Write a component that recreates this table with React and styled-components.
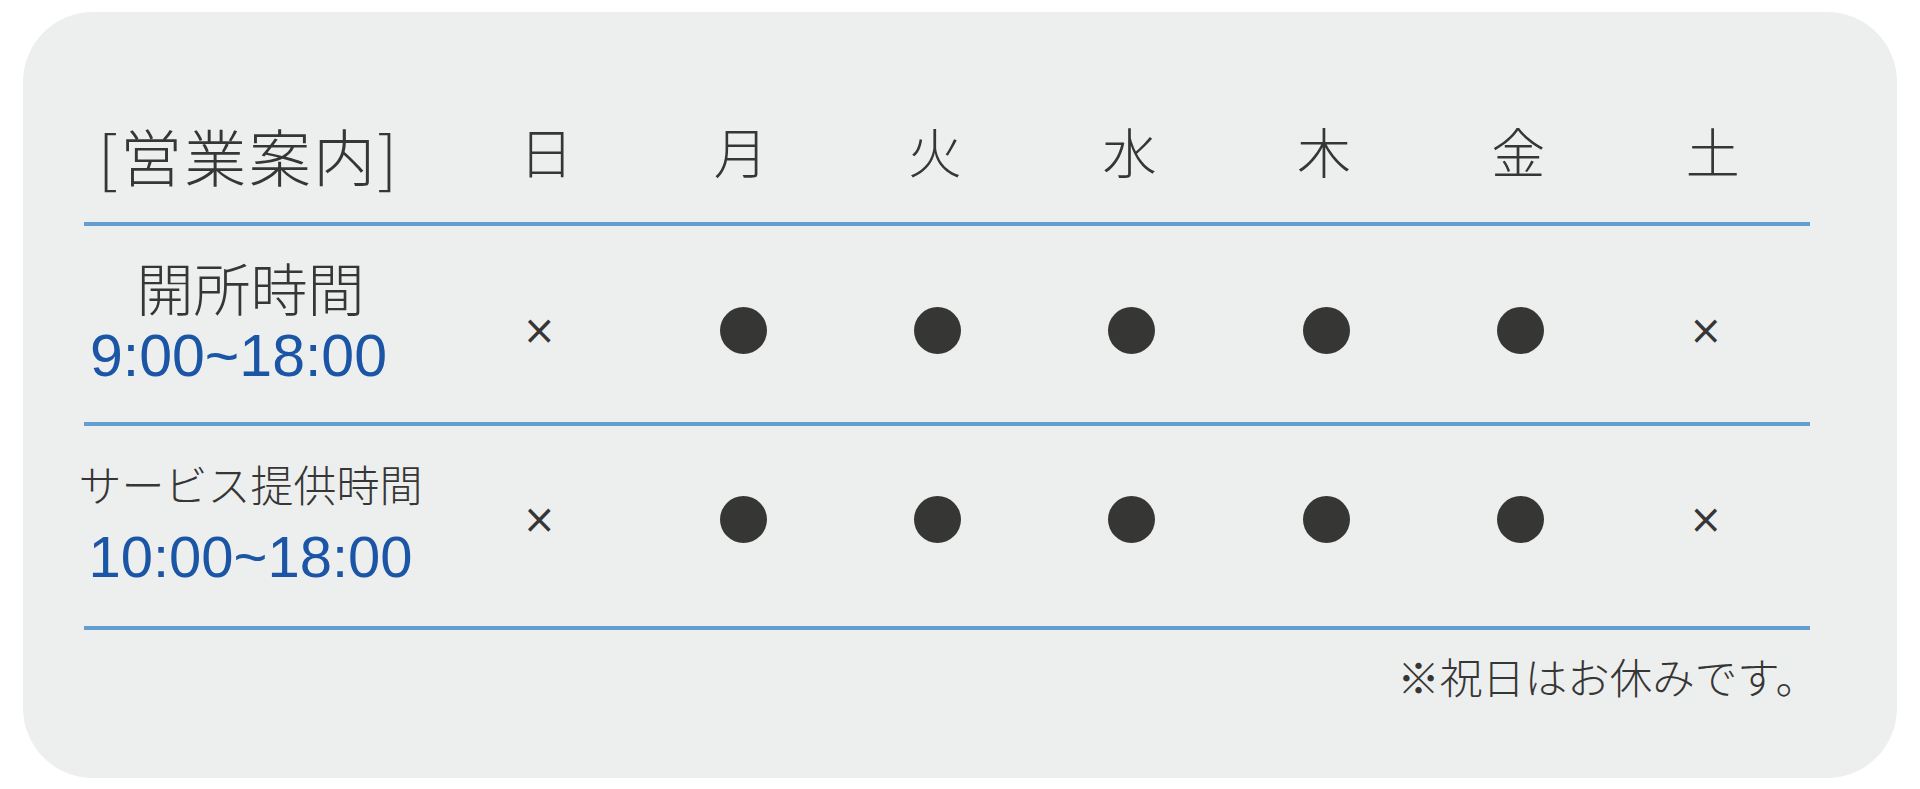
import React from "react";
import styled, { createGlobalStyle } from "styled-components";

const GlobalStyle = createGlobalStyle`
  html, body { margin: 0; padding: 0; background: #ffffff; }
  body {
    font-family: "Noto Sans CJK JP", "Noto Sans", sans-serif;
    color: #333333;
  }
`;

const Page = styled.main`
  padding: 12px 23px 11px 23px;
`;

const Card = styled.section`
  background: #edefee;
  border-radius: 70px;
  height: 766px;
  box-sizing: border-box;
  padding: 0 87px 0 61px;
  display: flex;
  flex-direction: column;
`;

const Row = styled.div`
  display: grid;
  grid-template-columns: 365px repeat(7, 1fr);
  align-items: center;
  box-sizing: border-box;
  height: ${(p) => p.$height}px;
  padding-top: ${(p) => p.$padTop || 0}px;
  padding-bottom: ${(p) => p.$padBottom || 0}px;
  border-bottom: 4px solid #629fd0;
`;

const Title = styled.h1`
  margin: 0;
  font-weight: 300;
  font-size: 62px;
  line-height: 1;
  letter-spacing: 2.4px;
  color: #363636;
  padding-left: 14px;
  transform: translateY(7px);
`;

const DayHead = styled.div`
  text-align: center;
  font-size: 54px;
  font-weight: 300;
  line-height: 1;
  color: #363636;
  transform: translateY(3px);
`;

const Label = styled.div`
  display: flex;
  flex-direction: column;
  align-items: center;
  padding-right: 32px;
  margin-top: ${(p) => p.$offset || 0}px;
`;

const LabelName = styled.div`
  font-size: ${(p) => p.$size}px;
  font-weight: 300;
  line-height: 1.2;
  color: #363636;
  white-space: nowrap;
`;

const Hours = styled.div`
  font-family: "Liberation Sans", Arial, sans-serif;
  font-size: ${(p) => p.$size}px;
  line-height: 1.2;
  color: #1b56a6;
  white-space: nowrap;
  margin-left: ${(p) => p.$shift || 0}px;
  margin-top: ${(p) => p.$gap || 0}px;
`;

const Cell = styled.div`
  display: flex;
  justify-content: center;
  align-items: center;
`;

const Dot = styled.span`
  display: block;
  width: 47px;
  height: 47px;
  border-radius: 50%;
  background: #363734;
  margin-left: 5px;
`;

const Cross = styled.span`
  display: block;
  font-family: "DejaVu Sans", sans-serif;
  font-size: 40px;
  line-height: 1;
  color: #363636;
  margin-right: 14px;
`;

const Note = styled.p`
  margin: 0;
  padding-top: 25px;
  text-align: right;
  font-size: 42.5px;
  font-weight: 300;
  line-height: 1;
  color: #363636;
  margin-right: -8px;
`;

const days = ["日", "月", "火", "水", "木", "金", "土"];

const schedule = [
  {
    name: "開所時間",
    size: 57,
    hours: "9:00~18:00",
    hoursSize: 59,
    shift: -24,
    gap: 0,
    offset: -16,
    open: [false, true, true, true, true, true, false],
    height: 200,
    padTop: 12,
    padBottom: 0,
  },
  {
    name: "サービス提供時間",
    size: 43,
    hours: "10:00~18:00",
    hoursSize: 58,
    shift: 0,
    gap: 12,
    offset: 12,
    open: [false, true, true, true, true, true, false],
    height: 204,
    padTop: 0,
    padBottom: 14,
  },
];

export default function App() {
  return (
    <Page>
      <GlobalStyle />
      <Card>
        <Row $height={214} $padTop={62}>
          <Title>[営業案内]</Title>
          {days.map((d) => (
            <DayHead key={d}>{d}</DayHead>
          ))}
        </Row>
        {schedule.map((s) => (
          <Row key={s.name} $height={s.height} $padTop={s.padTop} $padBottom={s.padBottom}>
            <Label $offset={s.offset}>
              <LabelName $size={s.size}>{s.name}</LabelName>
              <Hours $size={s.hoursSize} $shift={s.shift} $gap={s.gap}>
                {s.hours}
              </Hours>
            </Label>
            {s.open.map((o, i) => (
              <Cell key={i}>{o ? <Dot /> : <Cross>×</Cross>}</Cell>
            ))}
          </Row>
        ))}
        <Note>※祝日はお休みです。</Note>
      </Card>
    </Page>
  );
}
